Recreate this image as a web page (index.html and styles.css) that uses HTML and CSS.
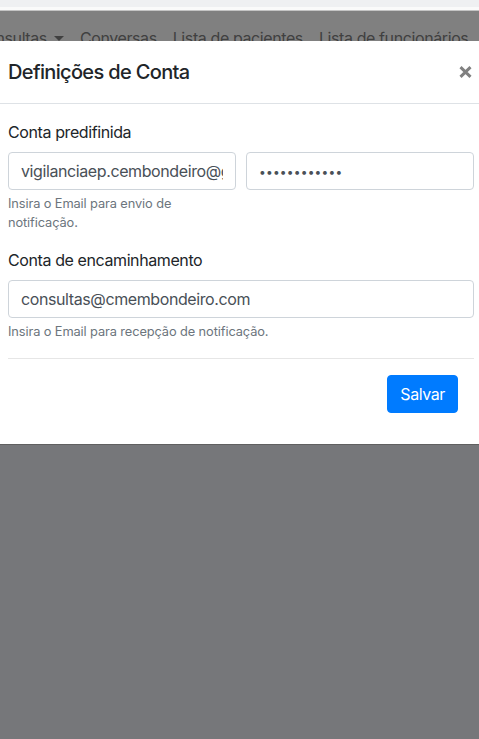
FILE: index.html
```html
<!DOCTYPE html>
<html lang="pt">
<head>
<meta charset="utf-8">
<title>Definições de Conta</title>
<link rel="stylesheet" href="styles.css">
</head>
<body>
<div class="chrome"></div>
<nav class="navstrip">
  <span class="navlink navlink-first">Consultas <span class="caret"></span></span>
  <span class="navlink">Conversas</span>
  <span class="navlink">Lista de pacientes</span>
  <span class="navlink">Lista de funcionários</span>
</nav>
<div class="modal">
  <div class="modal-header">
    <h5 class="modal-title">Definições de Conta</h5>
    <span class="close" aria-label="Close">
      <svg width="13" height="12" viewBox="0 0 13 12"><path d="M1.5 1.2 L11.5 10.8 M11.5 1.2 L1.5 10.8" stroke="#808080" stroke-width="3" fill="none"/></svg>
    </span>
  </div>
  <div class="modal-body">
    <div class="group">
      <label class="label">Conta predifinida</label>
      <div class="row2">
        <div class="col">
          <input class="input" type="text" value="vigilanciaep.cembondeiro@gmail.com">
          <small class="help">Insira o Email para envio de notificação.</small>
        </div>
        <div class="col">
          <input class="input input-pass" type="password" value="************">
        </div>
      </div>
    </div>
    <div class="group">
      <label class="label">Conta de encaminhamento</label>
      <input class="input" type="text" value="consultas@cmembondeiro.com">
      <small class="help">Insira o Email para recepção de notificação.</small>
    </div>
    <hr class="divider">
    <div class="actions">
      <button class="btn" type="button">Salvar</button>
    </div>
  </div>
</div>
<div class="rest"></div>
</body>
</html>
```
FILE: styles.css
```css
* { box-sizing: border-box; }
html, body { margin: 0; padding: 0; }
body {
  width: 479px;
  height: 739px;
  overflow: hidden;
  background: #76777a;
  font-family: Inter, "Noto Sans", "Liberation Sans", sans-serif;
  letter-spacing: -0.4px;
  color: #212529;
}
.chrome {
  height: 11px;
  background: #eff0f2;
  border-bottom: 1px solid #c4c4c4;
  box-shadow: inset 0 -3px 0 #fafafa;
}
.navstrip {
  height: 30px;
  background: #808080;
  overflow: hidden;
  display: flex;
  align-items: flex-start;
  white-space: nowrap;
  padding-top: 15px;
  font-size: 16px;
  line-height: 24px;
  color: #404040;
}
.navlink { padding: 0 8px; display: inline-flex; align-items: center; height: 24px; }
.navlink-first { margin-left: -33px; }
.caret {
  display: inline-block;
  margin-left: 7px;
  width: 0; height: 0;
  border-top: 5px solid #404040;
  border-left: 5px solid transparent;
  border-right: 5px solid transparent;
}
.modal {
  background: #fff;
  border-bottom: 1px solid #606060;
}
.modal-header {
  display: flex;
  align-items: center;
  justify-content: space-between;
  padding: 16px 7px 16px 8px;
  border-bottom: 1px solid #dee2e6;
}
.modal-title {
  margin: 0;
  font-size: 20px;
  line-height: 30px;
  font-weight: 500;
  letter-spacing: -0.65px;
  color: #212529;
}
.close { display: flex; width: 13px; height: 12px; }
.modal-body { padding: 16px 5px 31px 8px; }
.group { margin-bottom: 16px; }
.label {
  display: block;
  font-size: 16px;
  line-height: 24px;
  margin-bottom: 8px;
}
.row2 { display: grid; grid-template-columns: 1fr 1fr; column-gap: 10px; }
.col { min-width: 0; }
.input {
  display: block;
  width: 100%;
  height: 38px;
  padding: 6px 12px;
  border: 1px solid #ced4da;
  border-radius: 4px;
  font-family: inherit;
  font-size: 16px;
  line-height: 24px;
  letter-spacing: -0.4px;
  color: #495057;
  background: #fff;
}
.input-pass { font-size: 12px; letter-spacing: 0.2px; }
.help {
  display: block;
  margin-top: 4px;
  font-size: 12.8px;
  line-height: 19.2px;
  letter-spacing: -0.1px;
  color: #6c757d;
}
.divider {
  margin: 0 0 16px;
  border: 0;
  border-top: 1px solid #e6e6e6;
}
.actions { display: flex; justify-content: flex-end; padding-right: 16px; }
.btn {
  height: 38px;
  padding: 6px 12px;
  border: 1px solid #007bff;
  border-radius: 4px;
  background: #007bff;
  color: #fff;
  font-family: inherit;
  font-size: 16px;
  line-height: 24px;
  letter-spacing: -0.4px;
}
.rest { height: 400px; }
```
